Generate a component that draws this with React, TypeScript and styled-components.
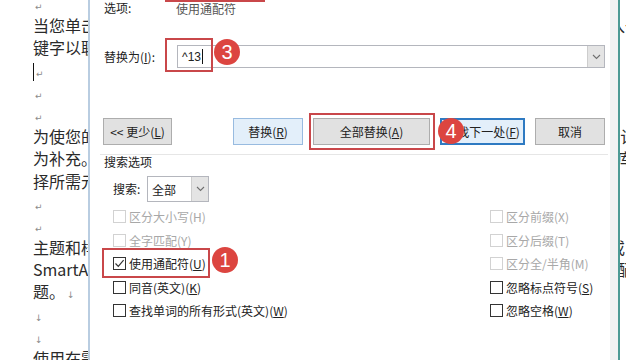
import React from 'react'
import styled, { createGlobalStyle } from 'styled-components'

const GlobalStyle = createGlobalStyle`
  html, body {
    margin: 0;
    padding: 0;
    background: #fff;
  }
  body {
    width: 640px;
    height: 360px;
    overflow: hidden;
    font-family: "Noto Sans CJK SC", "Noto Sans", sans-serif;
  }
`

const Screen = styled.div`
  position: relative;
  width: 640px;
  height: 360px;
  overflow: hidden;
  background: #fff;
`

// document behind the dialog
const Doc = styled.div`
  display: flex;
  flex-direction: column;
  width: 593px;
  margin-top: -8px;
  padding-left: 33px;
  font-family: "Noto Sans CJK SC", sans-serif;
  font-size: 16px;
  color: #2a2a2a;
`

const DocLine = styled.div`
  height: 22.2px;
  line-height: 22.2px;
  white-space: nowrap;
  overflow: hidden;
`

const Mark = styled.span`
  font-family: "DejaVu Sans", sans-serif;
  font-size: 9px;
  color: #8a8a8a;
  margin-left: 2px;
`

const Caret = styled.span`
  display: inline-block;
  width: 1px;
  height: 18px;
  background: #111;
  vertical-align: middle;
`

// the find & replace window
const Dialog = styled.div`
  position: absolute;
  left: 88px;
  top: 0;
  width: 532px;
  height: 360px;
  box-sizing: border-box;
  display: flex;
  flex-direction: column;
  padding: 0 13px;
  background: #fff;
  border-left: 2px solid #b9cde1;
  border-right: 2px solid #4e9a94;
  box-shadow: inset -8px 0 0 #f2f2f2;
  font-family: "Noto Sans CJK SC", sans-serif;
  font-size: 12px;
  color: #222;
`

const FieldRow = styled.div<{ $top: number; $h: number }>`
  display: flex;
  align-items: center;
  margin-top: ${p => p.$top}px;
  height: ${p => p.$h}px;
`

const Label = styled.div<{ $w: number; $indent?: number }>`
  width: ${p => p.$w}px;
  padding-left: ${p => p.$indent || 1}px;
  box-sizing: border-box;
  flex-shrink: 0;
  line-height: 14px;
`

const Value = styled.div`
  color: #555;
`

const Combo = styled.div<{ $w?: number }>`
  display: flex;
  align-items: stretch;
  height: 100%;
  box-sizing: border-box;
  ${p => (p.$w ? `width: ${p.$w}px;` : 'flex: 1;')}
  border: 1px solid #b4b6bd;
  background: #fff;
`

const ComboText = styled.div`
  flex: 1;
  display: flex;
  align-items: center;
  padding-left: 4px;
  font-family: "Liberation Sans", "Noto Sans CJK SC", sans-serif;
`

const ComboArrow = styled.div`
  width: 16px;
  display: flex;
  align-items: center;
  justify-content: center;
  background: #e4e4e4;
  border-left: 1px solid #cdcdcd;
  color: #777;
`

const InputCaret = styled.span`
  display: inline-block;
  width: 1px;
  height: 15px;
  margin-left: 1px;
  background: #111;
`

const ButtonRow = styled.div`
  display: flex;
  gap: 10px;
  margin-top: 50px;
  height: 27px;
`

const Button = styled.div<{ $w: number; $variant?: 'default' | 'light' | 'focus' }>`
  width: ${p => p.$w}px;
  box-sizing: border-box;
  display: flex;
  align-items: center;
  justify-content: center;
  background: ${p => (p.$variant === 'light' || p.$variant === 'focus' ? '#e3effa' : '#e1e1e1')};
  border: ${p =>
    p.$variant === 'focus'
      ? '2px solid #2e7ac2'
      : p.$variant === 'light'
      ? '1px solid #98bbe0'
      : '1px solid #adadad'};
  color: #222;
  &:first-child {
    margin-right: auto;
  }
`

const Separator = styled.div`
  height: 1px;
  margin: 9px -3px 0;
  background: #e6e6e6;
`

const GroupTitle = styled.div`
  height: 13px;
  line-height: 13px;
  padding-left: 1px;
`

const OptionGrid = styled.div`
  display: grid;
  grid-template-columns: 377px auto;
  grid-auto-rows: 23.5px;
  margin-top: 3px;
  padding-left: 10px;
`

const CheckItem = styled.div<{ $disabled?: boolean }>`
  display: flex;
  align-items: center;
  gap: 3px;
  color: ${p => (p.$disabled ? '#a8a8a8' : '#222')};
`

const Box = styled.div<{ $disabled?: boolean }>`
  width: 13px;
  height: 13px;
  box-sizing: border-box;
  border: 1px solid ${p => (p.$disabled ? '#d2d2d2' : '#333')};
  background: #fff;
  display: flex;
  align-items: center;
  justify-content: center;
`

// red annotations on top
const Highlight = styled.div<{ $x: number; $y: number; $w: number; $h: number }>`
  position: absolute;
  left: ${p => p.$x}px;
  top: ${p => p.$y}px;
  width: ${p => p.$w}px;
  height: ${p => p.$h}px;
  box-sizing: border-box;
  border: 2.5px solid #c9474a;
`

const StepBadge = styled.div<{ $x: number; $y: number }>`
  position: absolute;
  left: ${p => p.$x - 13}px;
  top: ${p => p.$y - 13}px;
  width: 26px;
  height: 26px;
  border-radius: 50%;
  background: #dc4540;
  color: #fff;
  display: flex;
  align-items: center;
  justify-content: center;
  font-family: "Liberation Sans", sans-serif;
  font-size: 20px;
  line-height: 1;
`

const Chevron = () => (
  <svg width="9" height="6" viewBox="0 0 9 6">
    <polyline points="1,1 4.5,4.5 8,1" fill="none" stroke="#6f6f6f" strokeWidth="1.1" />
  </svg>
)

const Tick = () => (
  <svg width="11" height="11" viewBox="0 0 11 11">
    <polyline points="1.5,5.5 4.3,8.3 9.6,2.2" fill="none" stroke="#333" strokeWidth="1.2" />
  </svg>
)

const docLines: { text: string; mark?: string; caret?: boolean }[] = [
  { text: '', mark: '↵' },
  { text: '当您单击联机视频时，可以在想要添加的视频的嵌入代码中进行粘贴。您也可以键入一个关' },
  { text: '键字以联机搜索最适合您的文档的视频。', mark: '↵' },
  { text: '', mark: '↵', caret: true },
  { text: '', mark: '↵' },
  { text: '', mark: '↵' },
  { text: '为使您的文档具有专业外观，Word 提供了页眉、页脚、封面和文本框设计，这些设计可互' },
  { text: '为补充。例如，您可以添加匹配的封面、页眉和提要栏。单击“插入”，然后从不同库中选' },
  { text: '择所需元素。', mark: '↵' },
  { text: '', mark: '↵' },
  { text: '', mark: '↵' },
  { text: '主题和样式也有助于文档保持协调。当您单击设计并选择新的主题时，图片、图表或' },
  { text: 'SmartArt 图形将会更改以匹配新的主题。当应用样式时，您的标题会进行更改以匹配新的主' },
  { text: '题。', mark: '↓' },
  { text: '', mark: '↓' },
  { text: '', mark: '↓' },
  { text: '使用在需要位置出现的新按钮在 Word 中保存时间。' },
]

type Opt = { label: string; key: string; disabled?: boolean; checked?: boolean }

const leftOptions: Opt[] = [
  { label: '区分大小写', key: 'H', disabled: true },
  { label: '全字匹配', key: 'Y', disabled: true },
  { label: '使用通配符', key: 'U', checked: true },
  { label: '同音(英文)', key: 'K' },
  { label: '查找单词的所有形式(英文)', key: 'W' },
]

const rightOptions: Opt[] = [
  { label: '区分前缀', key: 'X', disabled: true },
  { label: '区分后缀', key: 'T', disabled: true },
  { label: '区分全/半角', key: 'M', disabled: true },
  { label: '忽略标点符号', key: 'S' },
  { label: '忽略空格', key: 'W' },
]

const Option: React.FC<{ opt: Opt }> = ({ opt }) => (
  <CheckItem $disabled={opt.disabled}>
    <Box $disabled={opt.disabled}>{opt.checked && <Tick />}</Box>
    <span>
      {opt.label}(
      {opt.disabled ? opt.key : <u>{opt.key}</u>})
    </span>
  </CheckItem>
)

const App: React.FC = () => {
  const rows: Opt[] = []
  leftOptions.forEach((o, i) => {
    rows.push(o, rightOptions[i])
  })

  return (
    <Screen>
      <GlobalStyle />
      <Doc>
        {docLines.map((l, i) => (
          <DocLine key={i}>
            {l.caret && <Caret />}
            {l.text}
            {l.mark && <Mark>{l.mark}</Mark>}
          </DocLine>
        ))}
      </Doc>

      <Dialog>
        <FieldRow $top={0} $h={16}>
          <Label $w={73}>选项:</Label>
          <Value>使用通配符</Value>
        </FieldRow>

        <FieldRow $top={29} $h={23}>
          <Label $w={74}>
            替换为(<u>I</u>):
          </Label>
          <Combo>
            <ComboText>
              ^13
              <InputCaret />
            </ComboText>
            <ComboArrow>
              <Chevron />
            </ComboArrow>
          </Combo>
        </FieldRow>

        <ButtonRow>
          <Button $w={69}>
            &lt;&lt; 更少(<u>L</u>)
          </Button>
          <Button $w={70} $variant="light">
            替换(<u>R</u>)
          </Button>
          <Button $w={117}>
            全部替换(<u>A</u>)
          </Button>
          <Button $w={85} $variant="focus">
            查找下一处(<u>F</u>)
          </Button>
          <Button $w={70}>取消</Button>
        </ButtonRow>

        <Separator />
        <GroupTitle>搜索选项</GroupTitle>

        <FieldRow $top={8} $h={26}>
          <Label $w={44} $indent={10}>
            搜索:
          </Label>
          <Combo $w={62}>
            <ComboText>全部</ComboText>
            <ComboArrow>
              <Chevron />
            </ComboArrow>
          </Combo>
        </FieldRow>

        <OptionGrid>
          {rows.map((o, i) => (
            <Option key={i} opt={o} />
          ))}
        </OptionGrid>
      </Dialog>

      <Highlight $x={165} $y={-20} $w={100} $h={22} />
      <Highlight $x={165} $y={38} $w={48} $h={34} />
      <Highlight $x={309} $y={113} $w={126} $h={37} />
      <Highlight $x={102} $y={248} $w={108} $h={30} />

      <StepBadge $x={227} $y={52}>3</StepBadge>
      <StepBadge $x={451} $y={131}>4</StepBadge>
      <StepBadge $x={225} $y={260}>1</StepBadge>
    </Screen>
  )
}

export default App
